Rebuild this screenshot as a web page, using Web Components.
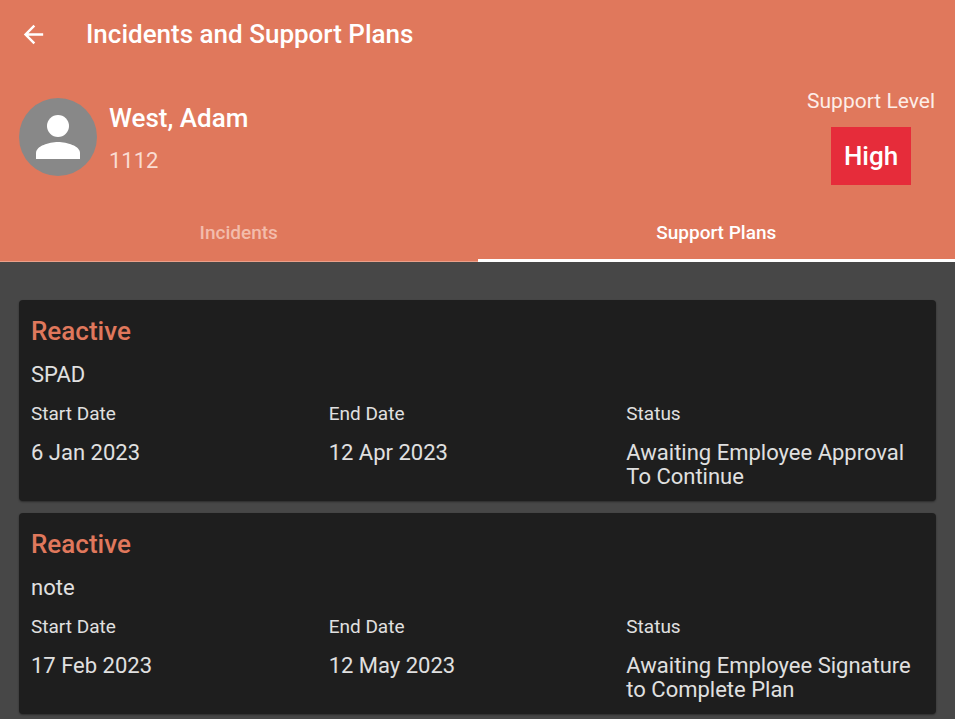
<!DOCTYPE html>
<html lang="en">
<head>
<meta charset="utf-8">
<meta name="viewport" content="width=device-width, initial-scale=1">
<title>Incidents and Support Plans</title>
<style>
  :root {
    --primary: #e0785c;
    --surface: #1e1e1e;
    --backdrop: #474747;
    --danger: #e62c3a;
    --text: #e0e0e0;
  }
  body {
    margin: 0;
    background: var(--backdrop);
    color: var(--text);
    font-family: Roboto, "Liberation Sans", sans-serif;
    font-size: 22px;
    line-height: 24px;
  }
</style>
</head>
<body>
<support-app>
  <app-bar slot="header">Incidents and Support Plans</app-bar>
  <person-summary slot="header">
    <span slot="name">West, Adam</span>
    <span slot="number">1112</span>
    <support-level slot="level">High</support-level>
  </person-summary>
  <tab-strip slot="header">
    <tab-item>Incidents</tab-item>
    <tab-item selected>Support Plans</tab-item>
  </tab-strip>
  <plan-card>
    <span slot="type">Reactive</span>
    <span slot="note">SPAD</span>
    <plan-field label="Start Date">6 Jan 2023</plan-field>
    <plan-field label="End Date">12 Apr 2023</plan-field>
    <plan-field label="Status">Awaiting Employee Approval To Continue</plan-field>
  </plan-card>
  <plan-card>
    <span slot="type">Reactive</span>
    <span slot="note">note</span>
    <plan-field label="Start Date">17 Feb 2023</plan-field>
    <plan-field label="End Date">12 May 2023</plan-field>
    <plan-field label="Status">Awaiting Employee Signature to Complete Plan</plan-field>
  </plan-card>
</support-app>

<script>
  const define = (name, html, setup) => {
    const template = document.createElement('template');
    template.innerHTML = html;
    customElements.define(name, class extends HTMLElement {
      constructor() {
        super();
        this.attachShadow({ mode: 'open' }).append(template.content.cloneNode(true));
      }
      connectedCallback() {
        if (setup) setup(this, this.shadowRoot);
      }
    });
  };

  define('support-app', `
    <style>
      :host { display: block; }
      header { background: var(--primary); color: #fff; }
      main { display: flex; flex-direction: column; gap: 12px; padding: 38px 19px 5px; }
    </style>
    <header><slot name="header"></slot></header>
    <main><slot></slot></main>`);

  define('app-bar', `
    <style>
      :host { display: flex; align-items: center; gap: 38px; height: 68px; padding: 0 19px; }
      button { display: flex; padding: 0; border: 0; background: none; color: inherit; cursor: pointer; }
      svg { width: 29px; height: 29px; }
      h1 { margin: 0; font-size: 26px; font-weight: 500; line-height: 32px; }
    </style>
    <button type="button" aria-label="Back">
      <svg viewBox="0 0 24 24" fill="currentColor" aria-hidden="true"><path d="M20 11H7.83l5.59-5.59L12 4l-8 8 8 8 1.41-1.41L7.83 13H20v-2z"/></svg>
    </button>
    <h1><slot></slot></h1>`);

  define('person-summary', `
    <style>
      :host { display: flex; align-items: center; gap: 12px; padding: 21px 20px 19px 19px; }
      svg { flex: none; width: 78px; height: 78px; }
      .who { flex: 1; display: flex; flex-direction: column; gap: 15px; }
      h2 { margin: 0; font-size: 26px; font-weight: 500; line-height: 32px; }
      .number { color: #fadcd2; }
    </style>
    <svg viewBox="0 0 78 78" aria-hidden="true">
      <circle cx="39" cy="39" r="39" fill="#888"/>
      <circle cx="39" cy="28" r="11" fill="#fff"/>
      <path d="M17 61V55C17 48 30 44 39 44S61 48 61 55V61Z" fill="#fff"/>
    </svg>
    <div class="who">
      <h2><slot name="name"></slot></h2>
      <div class="number"><slot name="number"></slot></div>
    </div>
    <slot name="level"></slot>`);

  define('support-level', `
    <style>
      :host { display: flex; flex-direction: column; align-items: center; gap: 14px; color: #fdeee8; font-size: 21px; }
      strong { padding: 13px; background: var(--danger); color: #fff; font-size: 26px; font-weight: 500; line-height: 32px; }
    </style>
    <span>Support Level</span>
    <strong><slot></slot></strong>`);

  define('tab-strip', `
    <style>
      :host { display: grid; grid-auto-flow: column; grid-auto-columns: 1fr; }
    </style>
    <slot></slot>`, host => host.setAttribute('role', 'tablist'));

  define('tab-item', `
    <style>
      :host { display: grid; }
      button {
        height: 58px; padding: 0; border: 0; background: none; box-shadow: inset 0 -1px #eba08a;
        color: #f3bcab; font: inherit; font-size: 19px; font-weight: 500; cursor: pointer;
      }
      :host([selected]) button { box-shadow: inset 0 -3px #fff; color: #fff; }
    </style>
    <button type="button" role="tab"><slot></slot></button>`, (host, root) => {
      root.querySelector('button').setAttribute('aria-selected', host.hasAttribute('selected'));
    });

  define('plan-card', `
    <style>
      :host { display: block; padding: 12px; border-radius: 4px; background: var(--surface); box-shadow: 0 1px 2px #0006; }
      h3 { margin: 0 0 13px; color: var(--primary); font-size: 26px; font-weight: 500; line-height: 38px; }
      p { margin: 0 0 15px; }
      .fields { display: grid; grid-template-columns: repeat(3, 1fr); }
    </style>
    <article>
      <h3><slot name="type"></slot></h3>
      <p><slot name="note"></slot></p>
      <div class="fields"><slot></slot></div>
    </article>`);

  define('plan-field', `
    <style>
      :host { display: block; padding-right: 12px; }
      dl, dd { margin: 0; }
      dt { margin-bottom: 15px; font-size: 19px; }
    </style>
    <dl><dt></dt><dd><slot></slot></dd></dl>`, (host, root) => {
      root.querySelector('dt').textContent = host.getAttribute('label');
    });
</script>
</body>
</html>
